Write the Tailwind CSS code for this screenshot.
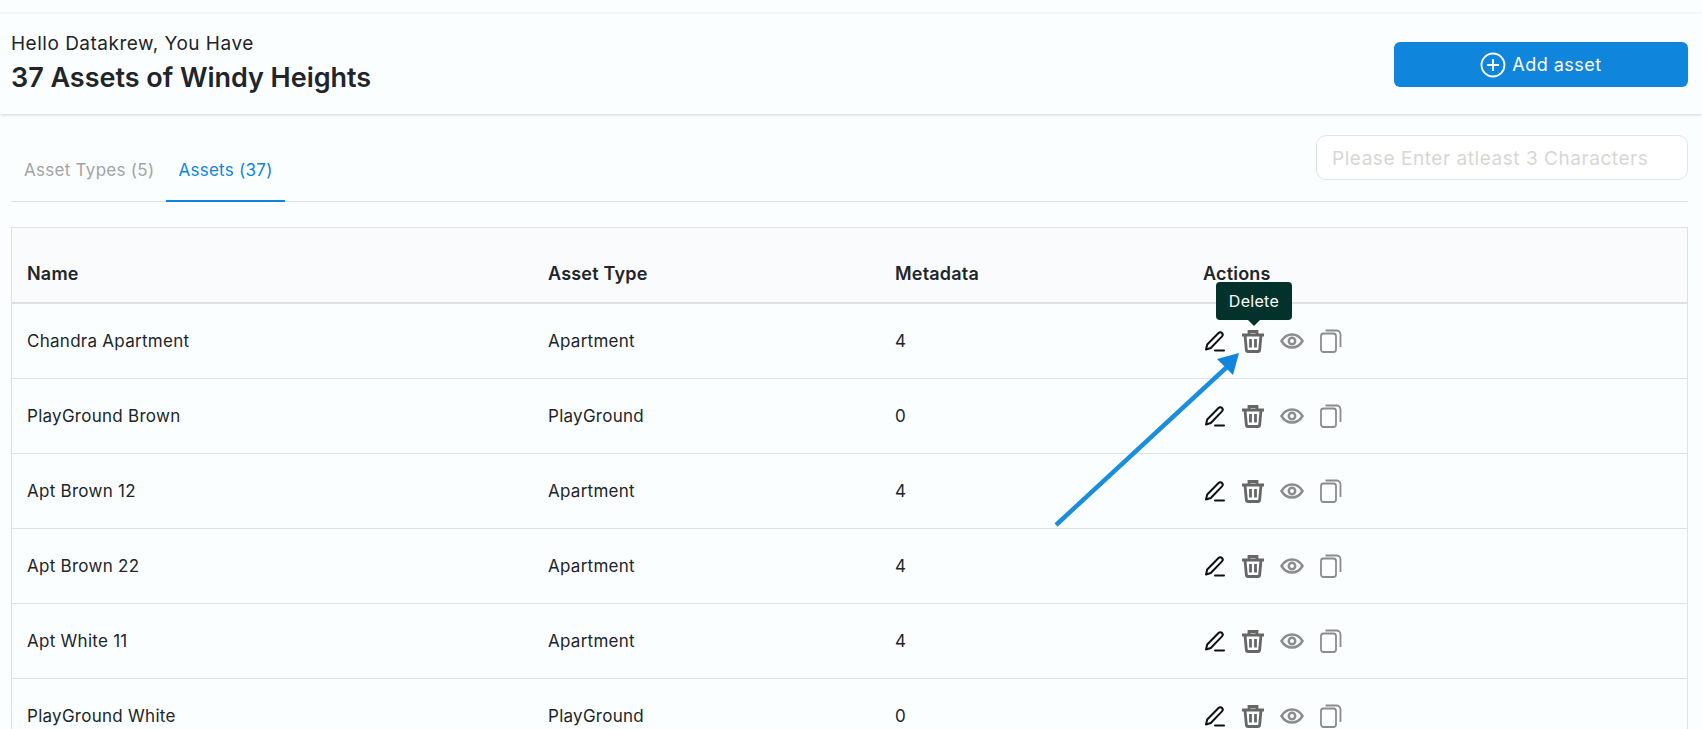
<!DOCTYPE html>
<html lang="en">

<head>
    <meta charset="UTF-8">
    <title>Assets</title>
    <script src="https://cdn.jsdelivr.net/npm/@tailwindcss/browser@4"></script>
</head>

<body class="bg-[#fbfeff] h-[729px] overflow-hidden relative font-['Inter',sans-serif] text-[#212529]">

    <!-- Header -->
    <div class="mt-[13px] h-[101px] border-t border-[#f3f5f6] shadow-[0_1px_3px_rgba(0,0,0,0.16)] flex items-start justify-between pl-[11px] pr-[14px]">
        <div class="pt-[16px]">
            <p class="text-[19px] leading-[27px] tracking-[0.5px]">Hello Datakrew, You Have</p>
            <h1 class="text-[27px] leading-[42px] font-semibold tracking-[-0.03px]">37 Assets of Windy Heights</h1>
        </div>
        <button class="mt-[28px] w-[294px] h-[45px] bg-[#0f85dc] rounded-[6px] text-white text-[18px] tracking-[0.5px] flex items-center justify-center gap-[6px]">
            <svg width="26" height="26" viewBox="0 0 26 26" fill="none" stroke="white" stroke-width="1.8">
                <circle cx="13" cy="13" r="11.5"></circle>
                <path d="M13 7v12M7 13h12"></path>
            </svg>
            Add asset
        </button>
    </div>

    <!-- Tabs and search -->
    <div class="ml-[11px] mr-[14px] h-[88px] border-b border-[#dee2e6] flex items-end justify-between">
        <div class="flex text-[17px] leading-[24px] tracking-[0.28px] pl-[1px]">
            <div class="px-[12px] pb-[18px] pt-[1px] text-[#a3a3a3]">Asset Types (5)</div>
            <div class="px-[12px] pb-[18px] pt-[1px] text-[#0f85dc] border-b-2 border-[#0f85dc] -mb-px">Assets (37)</div>
        </div>
        <input class="mb-[21px] w-[372px] h-[45px] border border-[#e2e4e6] rounded-[10px] px-[15px] pt-[1px] text-[19px] tracking-[0.55px] bg-white placeholder:text-[#d9d6d3]" placeholder="Please Enter atleast 3 Characters">
    </div>

    <!-- Table -->
    <div class="ml-[11px] mr-[14px] mt-[25px] border border-[#dee2e6] border-b-0">
        <div class="h-[76px] grid grid-cols-[521px_347px_308px_1fr] items-center bg-[#f9fbfc] border-b-2 border-[#dee2e6] pt-[16px] font-semibold text-[18px] tracking-[0.2px] pl-[15px]">
            <div>Name</div>
            <div>Asset Type</div>
            <div>Metadata</div>
            <div>Actions</div>
        </div>
        <div id="rows"></div>
    </div>

    <!-- Tooltip -->
    <div class="absolute left-[1216px] top-[282px] w-[76px] h-[38px] bg-[#03322c] rounded-[4px] text-white text-[16px] tracking-[0.3px] flex items-center justify-center">
        Delete
        <div class="absolute left-[32px] top-[38px] w-0 h-0 border-x-[6px] border-x-transparent border-t-[6px] border-t-[#03322c]"></div>
    </div>

    <!-- Arrow -->
    <svg class="absolute left-0 top-0 pointer-events-none" width="1702" height="729" fill="none">
        <path d="M1056 525 L1228 366" stroke="#1a8ddd" stroke-width="4.500"></path>
        <path d="M1239 353 L1217 359 L1233 375 Z" fill="#0f85dc"></path>
    </svg>

    <script>
        const rows = [
            ['Chandra Apartment', 'Apartment', 4],
            ['PlayGround Brown', 'PlayGround', 0],
            ['Apt Brown 12', 'Apartment', 4],
            ['Apt Brown 22', 'Apartment', 4],
            ['Apt White 11', 'Apartment', 4],
            ['PlayGround White', 'PlayGround', 0],
        ];

        const actions = `
            <div class="flex items-center pl-[1px]">
                <svg width="22" height="22" viewBox="0 0 22 22" fill="none" stroke="#111" stroke-width="2" stroke-linejoin="round" class="mr-[15px]">
                    <path d="M2 19.500l1.200-5L14.500 3c1-1 2.600-1 3.500 0s1 2.400 0 3.400L6.800 18 2 19.500z"></path>
                    <path d="M11 20.500h9" stroke-linecap="round"></path>
                </svg>
                <svg width="24" height="24" viewBox="0 0 24 24" fill="none" stroke="#666" stroke-width="2.800" class="mr-[15px]">
                    <path d="M1 6h22M8 6V2.500h8V6M4 6l1.300 14.500c.1 1 .8 2 1.800 2h9.800c1 0 1.700-1 1.800-2L20 6"></path>
                    <path d="M9.500 10v8.500M14.500 10v8.500"></path>
                </svg>
                <svg width="24" height="24" viewBox="0 0 24 24" fill="none" stroke="#8c8c8c" stroke-width="2.500" class="mr-[16px]">
                    <path d="M1.500 12C4 7.800 7.600 5.500 12 5.500s8 2.300 10.500 6.500C20 16.200 16.400 18.500 12 18.500S4 16.200 1.500 12z"></path>
                    <circle cx="12" cy="12" r="3.200"></circle>
                </svg>
                <svg width="22" height="24" viewBox="0 0 22 24" fill="none" stroke="#8c8c8c" stroke-width="1.800">
                    <rect x="1" y="4.500" width="15" height="18.500" rx="2.500"></rect>
                    <path d="M5.500 1.500h11c2.200 0 4 1.800 4 4V18"></path>
                </svg>
            </div>`;

        document.getElementById('rows').innerHTML = rows.map(([name, type, meta]) => `
            <div class="h-[75px] grid grid-cols-[521px_347px_308px_1fr] items-center border-b border-[#dee2e6] text-[17px] tracking-[0.27px] pl-[15px]">
                <div class="pt-[1px]">${name}</div>
                <div class="pt-[1px]">${type}</div>
                <div class="pt-[1px]">${meta}</div>
                ${actions}
            </div>`).join('');
    </script>
</body>

</html>
